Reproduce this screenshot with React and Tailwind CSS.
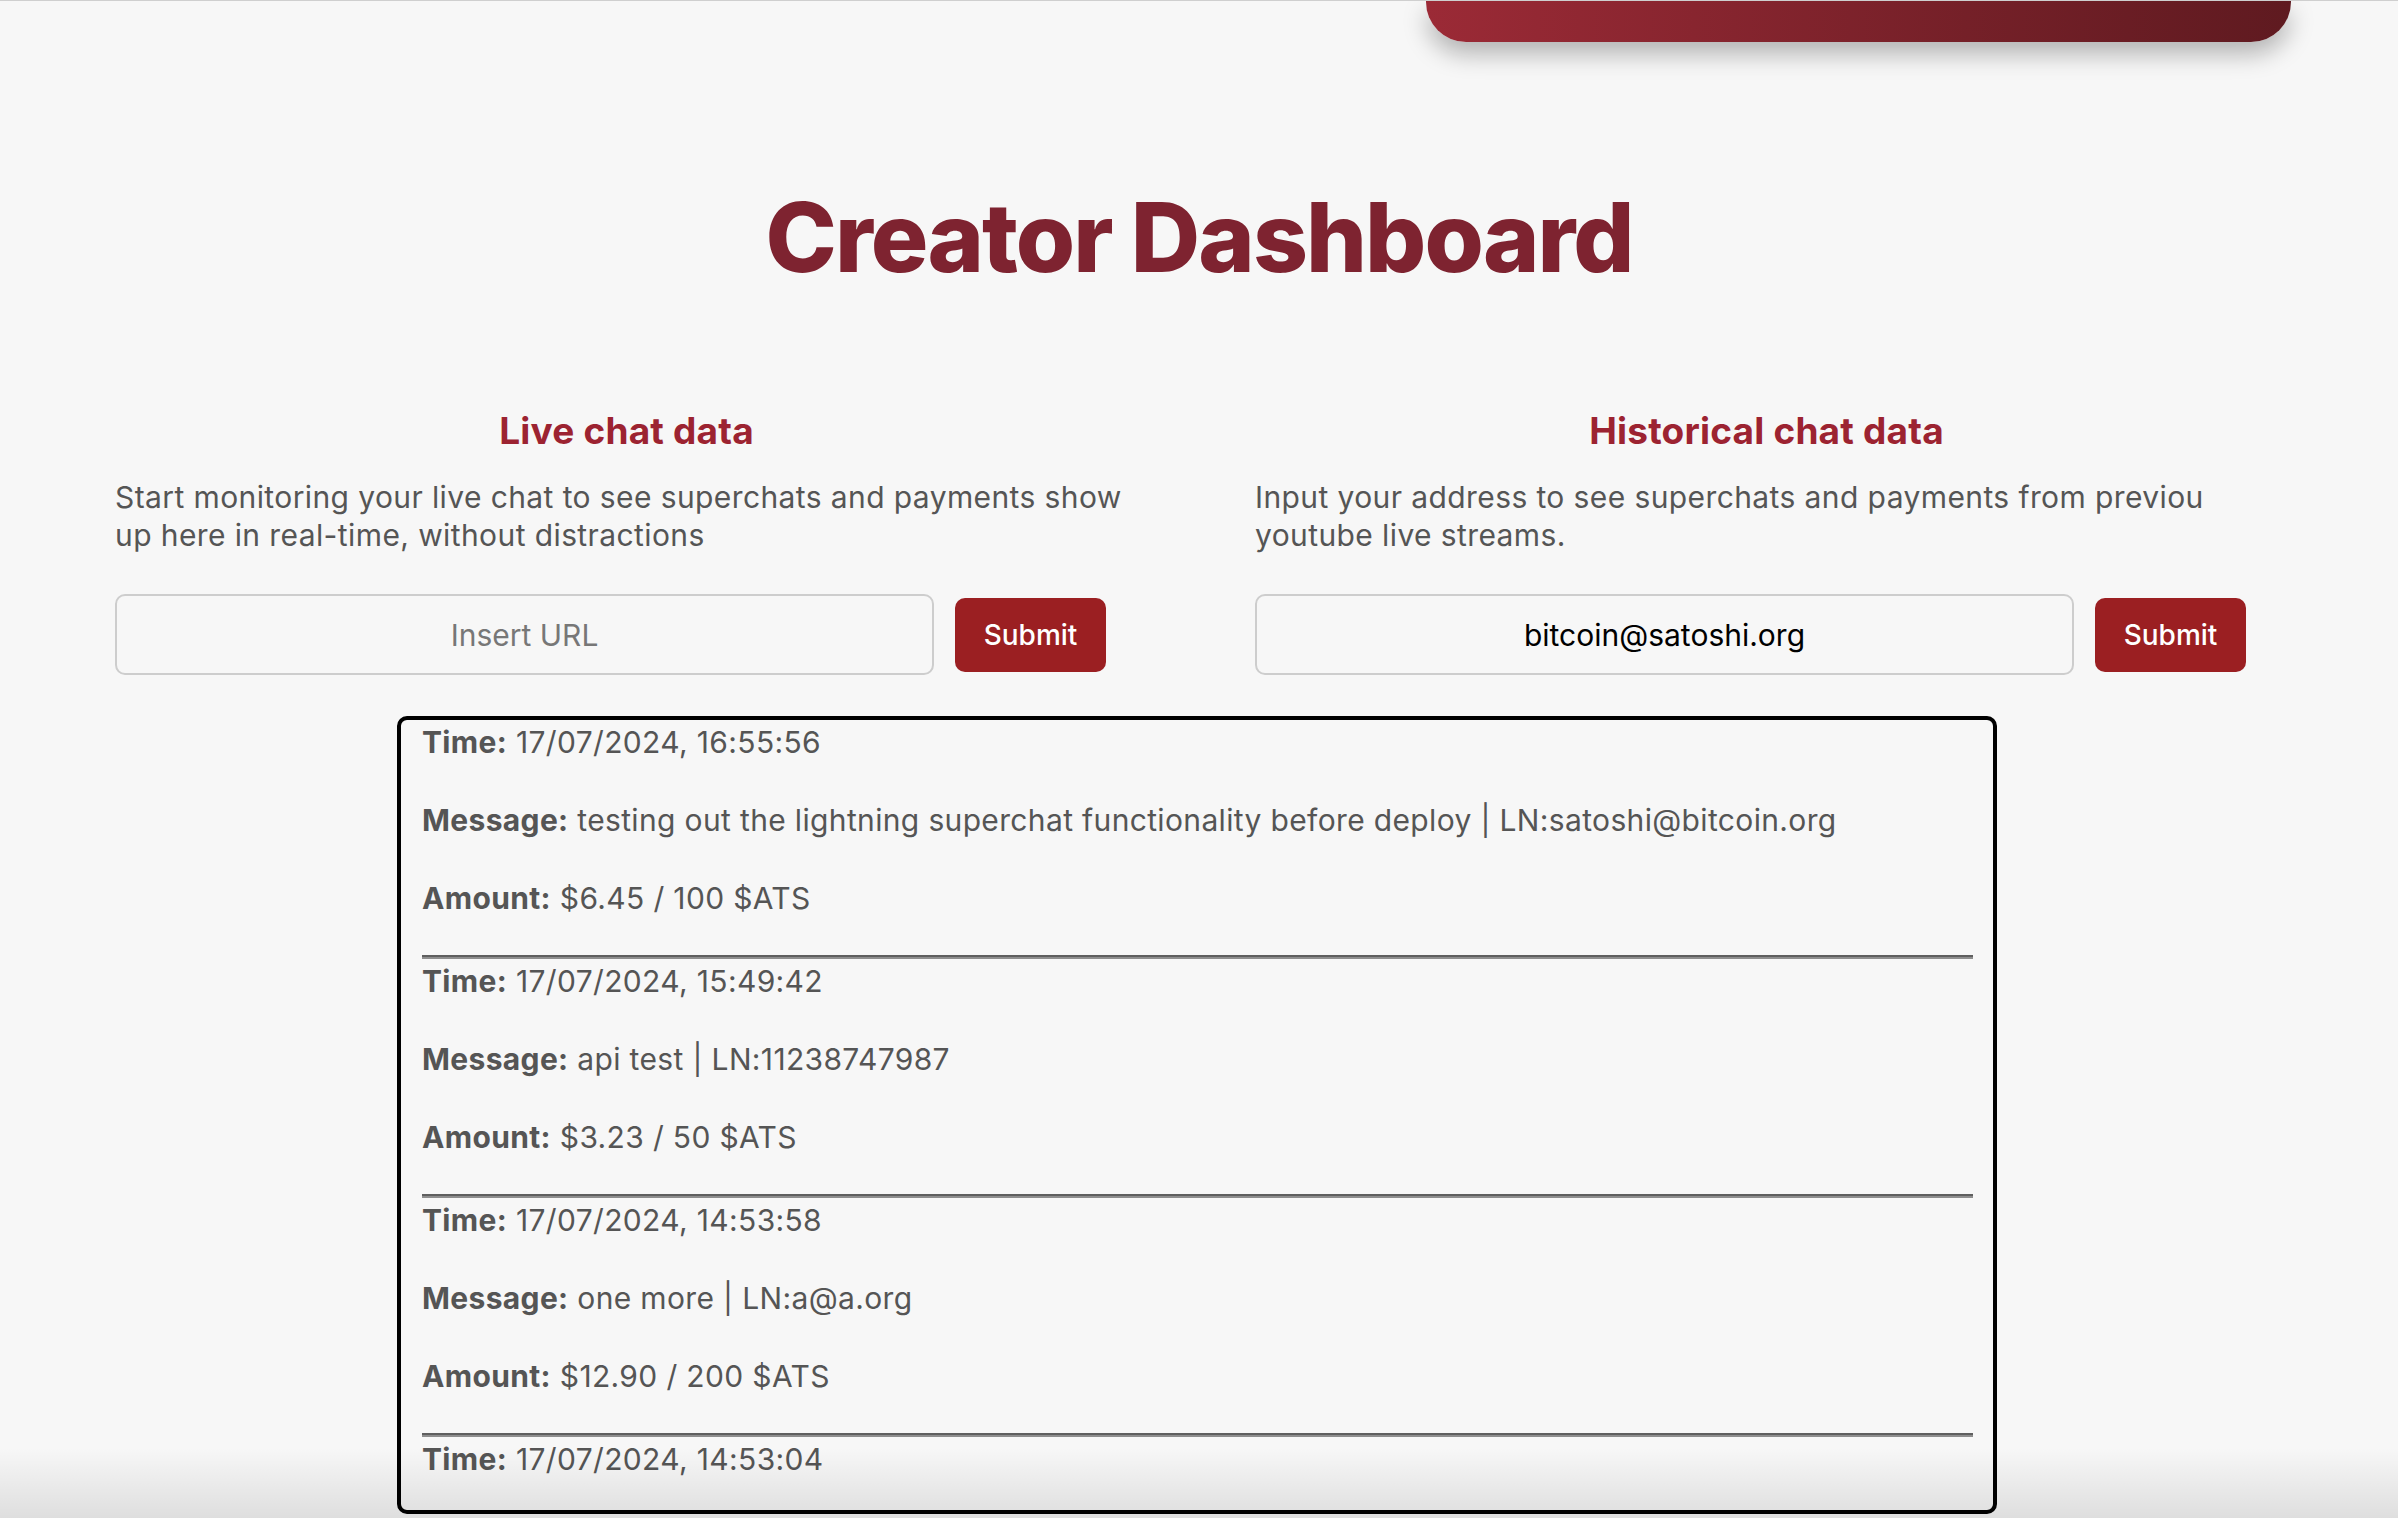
import React from "react";

const entries = [
  {
    time: "17/07/2024, 16:55:56",
    message:
      "testing out the lightning superchat functionality before deploy | LN:satoshi@bitcoin.org",
    amount: "$6.45 / 100 $ATS",
  },
  { time: "17/07/2024, 15:49:42", message: "api test | LN:11238747987", amount: "$3.23 / 50 $ATS" },
  { time: "17/07/2024, 14:53:58", message: "one more | LN:a@a.org", amount: "$12.90 / 200 $ATS" },
];

function Rule({ className = "" }) {
  return <div className={"h-[4px] border-t-2 border-b-2 border-t-[#5f5f5f] border-b-[#8e8e8e] " + className} />;
}

function Entry({ e }) {
  return (
    <div className="flex flex-col">
      <p className="leading-[44px]">
        <span className="font-bold">Time:</span> {e.time}
      </p>
      <p className="mt-[34px] leading-[44px]">
        <span className="font-bold">Message:</span> {e.message}
      </p>
      <p className="mt-[34px] leading-[44px]">
        <span className="font-bold">Amount:</span> {e.amount}
      </p>
      <Rule className="mt-[35px]" />
    </div>
  );
}

function Column({ title, text, placeholder, value }) {
  return (
    <div className="flex flex-col">
      <h3 className="text-center text-[37px] leading-none font-bold text-[#9c2331] tracking-[0.2px]">{title}</h3>
      <p className="mt-[29px] text-[30px] leading-[38px] text-[#555] tracking-[0.4px]">{text}</p>
      <div className="mt-[40px] flex items-center gap-[21px]">
        <input
          className="w-[819px] h-[81px] border-2 border-[#cdcdcd] rounded-[10px] bg-transparent text-center text-[30px] text-black placeholder:text-[#777] outline-none"
          placeholder={placeholder}
          defaultValue={value}
        />
        <button className="w-[151px] h-[74px] rounded-[10px] bg-[#9b1f22] text-white text-[28px] font-medium">
          Submit
        </button>
      </div>
    </div>
  );
}

export default function App() {
  return (
    <div
      className="relative h-[1518px] overflow-hidden bg-[#f7f7f7] border-t border-[#cfcfcf]"
      style={{ fontFamily: "Inter, 'Noto Sans', sans-serif" }}
    >
      <div className="flex justify-end pr-[107px]">
        <div className="w-[865px] h-[41px] rounded-b-[40px] bg-linear-to-r from-[#9b2a36] to-[#5f1a20] shadow-[0_12px_24px_rgba(0,0,0,0.28)]" />
      </div>

      <h1 className="mt-[147px] text-center text-[96px] leading-none font-extrabold text-[#7e2330] tracking-[-1.9px]">
        Creator Dashboard
      </h1>

      <div className="mt-[127px] grid grid-cols-[1023px_1023px] gap-x-[117px] pl-[115px]">
        <Column
          title="Live chat data"
          text="Start monitoring your live chat to see superchats and payments show up here in real-time, without distractions"
          placeholder="Insert URL"
        />
        <Column
          title="Historical chat data"
          text="Input your address to see superchats and payments from previou youtube live streams."
          placeholder="Insert address"
          value="bitcoin@satoshi.org"
        />
      </div>

      <div className="mt-[41px] ml-[397px] w-[1600px] h-[798px] border-4 border-black rounded-[10px] overflow-hidden pl-[21px] pr-[20px] text-[30px] text-[#555] tracking-[0.35px]">
        <Rule className="-mt-[4px]" />
        {entries.map((e, i) => (
          <Entry key={i} e={e} />
        ))}
        <p className="leading-[44px]">
          <span className="font-bold">Time:</span> 17/07/2024, 14:53:04
        </p>
      </div>

      <div className="pointer-events-none absolute inset-x-0 bottom-0 h-[70px] bg-linear-to-b from-transparent to-black/10" />
    </div>
  );
}
